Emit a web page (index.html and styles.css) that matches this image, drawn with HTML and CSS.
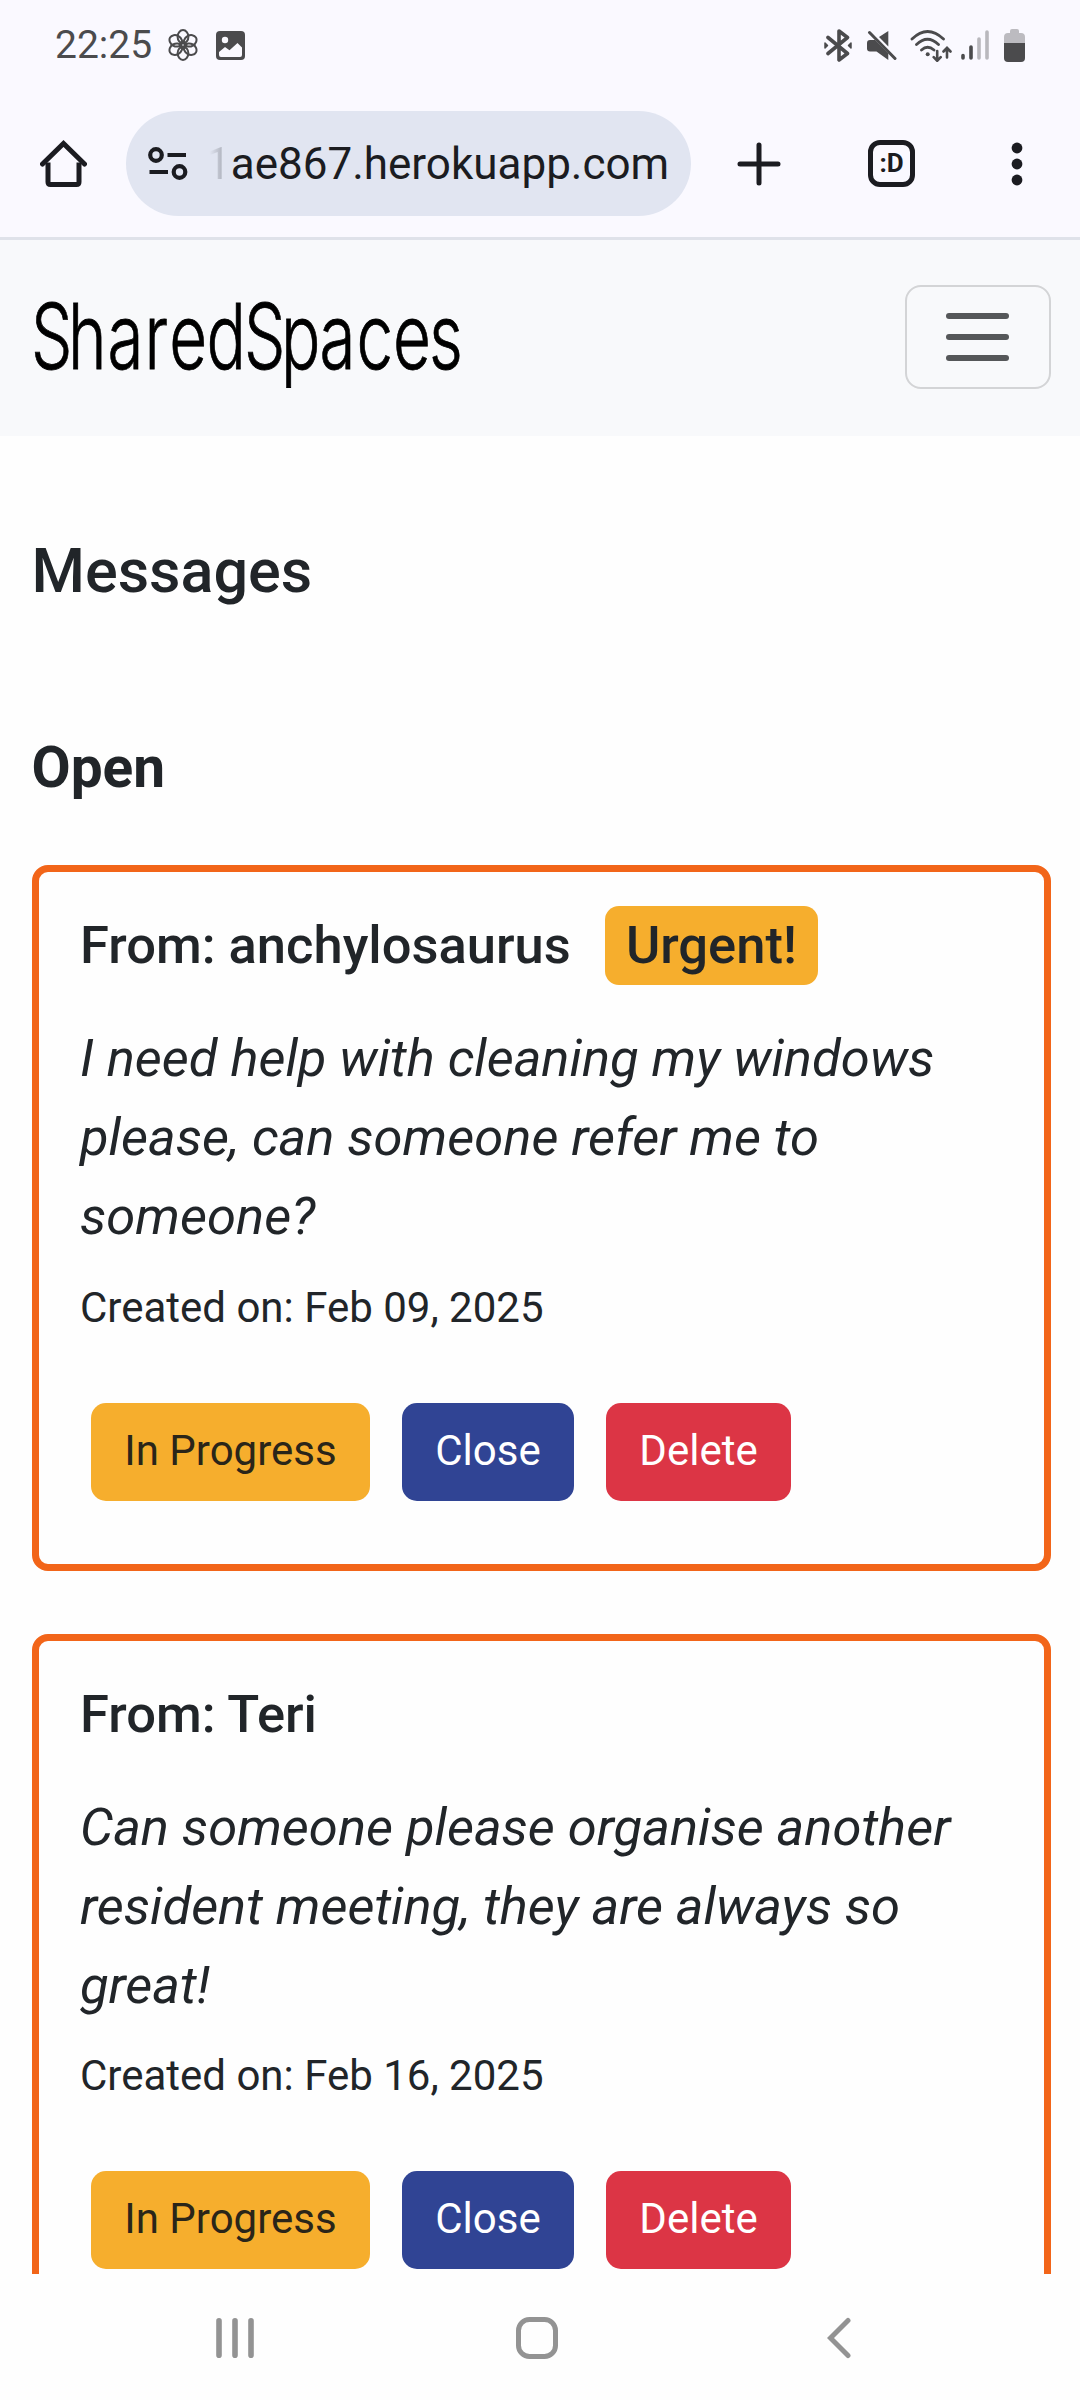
FILE: index.html
```html
<!DOCTYPE html>
<html lang="en">
<head>
<meta charset="utf-8">
<title>SharedSpaces</title>
<link rel="stylesheet" href="styles.css">
</head>
<body>
<div class="screen">
  <div class="status">
    <span class="clock">22:25</span>
    <svg class="ico-flower" width="30" height="32" viewBox="-15 -16 30 32" fill="none" stroke="#4b4b4d" stroke-width="2">
      <ellipse cx="0" cy="-8.3" rx="5.4" ry="6.6"/>
      <ellipse cx="0" cy="-8.3" rx="5.4" ry="6.6" transform="rotate(60)"/>
      <ellipse cx="0" cy="-8.3" rx="5.4" ry="6.6" transform="rotate(120)"/>
      <ellipse cx="0" cy="-8.3" rx="5.4" ry="6.6" transform="rotate(180)"/>
      <ellipse cx="0" cy="-8.3" rx="5.4" ry="6.6" transform="rotate(240)"/>
      <ellipse cx="0" cy="-8.3" rx="5.4" ry="6.6" transform="rotate(300)"/>
      <circle r="3"/>
    </svg>
    <svg class="ico-photo" width="29" height="29" viewBox="0 0 29 29">
      <rect width="29" height="29" rx="4" fill="#4b4b4d"/>
      <circle cx="9" cy="9" r="3.2" fill="#faf9ff"/>
      <path d="M3 21 9 16l4.500 3.200L21.500 12l4.500 4.500V24q0 2-2 2H5q-2 0-2-2z" fill="#faf9ff"/>
    </svg>
    <div class="status-right">
      <svg width="28" height="33" viewBox="0 0 28 33" fill="none" stroke="#4b4b4d" stroke-width="3.6" stroke-linejoin="round" stroke-linecap="round">
        <path d="M4 8.500 23.500 24.500 15 31V2l8.500 6.500L4 24.500"/>
        <path d="M1 14v5l2.500-2.500zM27 14v5l-2.500-2.500z" fill="#4b4b4d" stroke-width="1.500"/>
      </svg>
      <svg class="ico-mute" width="30" height="31" viewBox="0 0 30 31" fill="#4b4b4d">
        <path d="M21.300 1v15.500L12 7z"/>
        <path d="M3 10h5l13.300 13.600V30L9.500 21.500H3q-3 0-3-3V13q0-3 3-3z"/>
        <path d="M2.500 2.500 28 28.500" stroke="#4b4b4d" stroke-width="3" stroke-linecap="round"/>
      </svg>
      <svg class="ico-wifi" width="42" height="33" viewBox="0 0 42 33" fill="none" stroke="#4b4b4d" stroke-width="2.800" stroke-linecap="round">
        <path d="M2 10Q17.500-5 33.500 10M6.500 15.500q11-10.500 22 0M11.500 21q6-5.500 12.500 0"/>
        <circle cx="17.700" cy="25.300" r="2" fill="#4b4b4d" stroke="none"/>
        <path d="M27.200 22v9.500M23.700 28.200l3.500 3.600 3.500-3.600M37 28.500v-9M33.500 22.500l3.500-3.700 3.500 3.700" stroke-width="2.600"/>
      </svg>
      <svg class="ico-signal" width="29" height="30" viewBox="0 0 29 30" stroke-width="3.600" stroke-linecap="round">
        <path d="M2 25.500v2.500M10 17v11" stroke="#4b4b4d"/>
        <path d="M18 9v19M26 2v26" stroke="#b9b8bd"/>
      </svg>
      <svg class="ico-battery" width="21" height="33" viewBox="0 0 21 33">
        <path d="M6 4V2q0-2 2-2h5q2 0 2 2v2h2q4 0 4 4v6H0V8q0-4 4-4z" fill="#bcbbc0"/>
        <path d="M0 14h21v15q0 4-4 4H4q-4 0-4-4z" fill="#4b4b4d"/>
      </svg>
    </div>
  </div>

  <div class="toolbar">
    <svg class="ico-home" width="47" height="47" viewBox="0 0 47 47" fill="none" stroke="#1b1c21" stroke-width="5">
      <path d="M8 22.500V42q0 2.500 2.500 2.500h26q2.500 0 2.500-2.500V22.500"/>
      <path d="M2.500 24 23.500 3.500 44.500 24" stroke-linecap="round"/>
    </svg>
    <div class="omnibox">
      <svg width="40" height="34" viewBox="0 0 40 34" fill="none" stroke="#1b1c21" stroke-width="4.200">
        <circle cx="8" cy="8" r="5.800"/><path d="M19.500 8H38M1.500 25H20"/><circle cx="31.500" cy="25" r="5.800"/>
      </svg>
      <span class="url"><span class="url-fade">1</span>ae867.herokuapp.com</span>
    </div>
    <svg class="ico-plus" width="44" height="44" viewBox="0 0 44 44" stroke="#1b1c21" stroke-width="5" stroke-linecap="round"><path d="M22 3v38M3 22h38"/></svg>
    <div class="tabs">:D</div>
    <svg class="ico-more" width="12" height="44" viewBox="0 0 12 44" fill="#1b1c21"><circle cx="6" cy="6" r="5.400"/><circle cx="6" cy="22" r="5.400"/><circle cx="6" cy="38" r="5.400"/></svg>
  </div>

  <div class="navbar">
    <svg class="brand" width="470" height="150" viewBox="-10 0 470 150"><text transform="scale(.72 1)" y="107" x="-1.4 50 104.9 156.3 190.8 242.2 294.4 345.8 399.3 450.6 501.4 551.4">SharedSpaces</text></svg>
    <div class="toggler"><i></i><i></i><i></i></div>
  </div>

  <div class="page">
    <h3>Messages</h3>
    <h4>Open</h4>
    <div class="card">
      <div class="from">From: anchylosaurus<span class="badge">Urgent!</span></div>
      <p class="message">I need help with cleaning my windows<br>please, can someone refer me to<br>someone?</p>
      <p class="created">Created on: Feb 09, 2025</p>
      <div class="actions"><span class="btn progress">In Progress</span><span class="btn close">Close</span><span class="btn delete">Delete</span></div>
    </div>
    <div class="card">
      <div class="from">From: Teri</div>
      <p class="message">Can someone please organise another<br>resident meeting, they are always so<br>great!</p>
      <p class="created">Created on: Feb 16, 2025</p>
      <div class="actions"><span class="btn progress">In Progress</span><span class="btn close">Close</span><span class="btn delete">Delete</span></div>
    </div>
  </div>

  <div class="sysnav">
    <svg width="38" height="42" viewBox="0 0 38 42" stroke="#939393" stroke-width="5.600" stroke-linecap="round"><path d="M3 3.800v34.400M19 3.800v34.400M35 3.800v34.400"/></svg>
    <svg class="ico-homekey" width="42" height="42" viewBox="0 0 42 42"><rect x="2.500" y="2.500" width="37" height="37" rx="11" fill="none" stroke="#939393" stroke-width="5"/></svg>
    <svg class="ico-back" width="24" height="42" viewBox="0 0 24 42" fill="none" stroke="#939393" stroke-width="5" stroke-linecap="round"><path d="M21 3.500 3.500 21 21 38.500"/></svg>
  </div>
</div>
</body>
</html>
```
FILE: styles.css
```css
* { box-sizing: border-box; }
body { margin: 0; background: #fff; font-family: Roboto, sans-serif; color: #212529; }
svg { display: block; flex: none; }
h3, h4, p { margin: 0; }
.screen { width: 1080px; height: 2400px; overflow: hidden; display: flex; flex-direction: column; background: #fefefe; }

.status { flex: none; height: 90px; padding: 0 55px; display: flex; align-items: center; background: #faf9ff; color: #4b4b4d; }
.clock { font-size: 39px; line-height: 46px; width: 113px; }
.ico-photo { margin-left: 18px; }
.status-right { margin-left: auto; display: flex; align-items: center; }
.ico-mute { margin-left: 15px; }
.ico-wifi { margin-left: 13px; }
.ico-signal { margin-left: 9px; }
.ico-battery { margin-left: 14px; }

.toolbar { flex: none; height: 150px; padding: 0 57px 0 40px; display: flex; align-items: center; background: #faf9ff; border-bottom: 3px solid #dfe2ea; }
.omnibox { width: 565px; height: 105px; margin-left: 39px; padding-left: 22px; border-radius: 53px; background: #e1e5f1; display: flex; align-items: center; }
.url { margin-left: 18px; padding-top: 1px; font-size: 44px; line-height: 52px; color: #1b1c21; white-space: nowrap; }
.url-fade { color: transparent; background: linear-gradient(90deg, #e1e5f1 15%, #8f929c); background-clip: text; -webkit-background-clip: text; }
.ico-plus { margin-left: 46px; }
.tabs { width: 47px; height: 47px; margin-left: 87px; border: 5px solid #1b1c21; border-radius: 12px; font-size: 26px; font-weight: 700; line-height: 37px; text-align: center; color: #1b1c21; }
.ico-more { margin-left: auto; }

.navbar { flex: none; height: 196px; padding: 0 29px 2px 22px; display: flex; align-items: center; justify-content: space-between; background: #f8f9fb; }
.brand text { font-family: Inter, sans-serif; font-size: 91px; font-weight: 300; fill: #000; stroke: #000; stroke-width: .8px; }
.toggler { width: 146px; height: 104px; border: 2px solid #d3d4d6; border-radius: 16px; display: flex; flex-direction: column; align-items: center; justify-content: center; gap: 15.500px; padding-right: 1px; }
.toggler i { width: 63px; height: 5.500px; border-radius: 3px; background: #555759; }

.page { flex: none; height: 1838px; overflow: hidden; padding: 99px 29px 0 32px; }
h3 { font-size: 61.100px; line-height: 73px; font-weight: 500; margin-bottom: 126px; text-indent: -.5px; }
h4 { font-size: 56.800px; line-height: 68px; font-weight: 700; margin-bottom: 63px; text-indent: -.5px; }
.card { height: 706px; border: 7px solid #f26519; border-radius: 16px; padding: 34px 42px 0 41px; margin-bottom: 63px; }
.from { display: flex; font-size: 52.500px; line-height: 79px; font-weight: 500; white-space: nowrap; }
.badge { margin-left: 34px; width: 213px; text-align: center; background: #f6ae2d; border-radius: 14px; }
.message { margin-top: 34px; font-size: 52.500px; line-height: 79px; font-style: italic; white-space: nowrap; }
.created { margin-top: 20px; font-size: 42px; line-height: 63px; }
.actions { margin: 64px 0 0 11px; display: flex; gap: 32px; }
.card + .card .created { margin-top: 19px; }
.btn { height: 98px; border-radius: 15px; font-size: 42px; line-height: 95px; text-align: center; color: #fff; }
.progress { width: 279px; background: #f6ae2d; color: #2a2519; }
.close { width: 172px; background: #304494; }
.delete { width: 185px; background: #dc3545; }

.sysnav { flex: none; height: 126px; padding: 2px 0 0 216px; display: flex; align-items: center; }
.ico-homekey { margin-left: 262px; }
.ico-back { margin-left: 269px; }
```
